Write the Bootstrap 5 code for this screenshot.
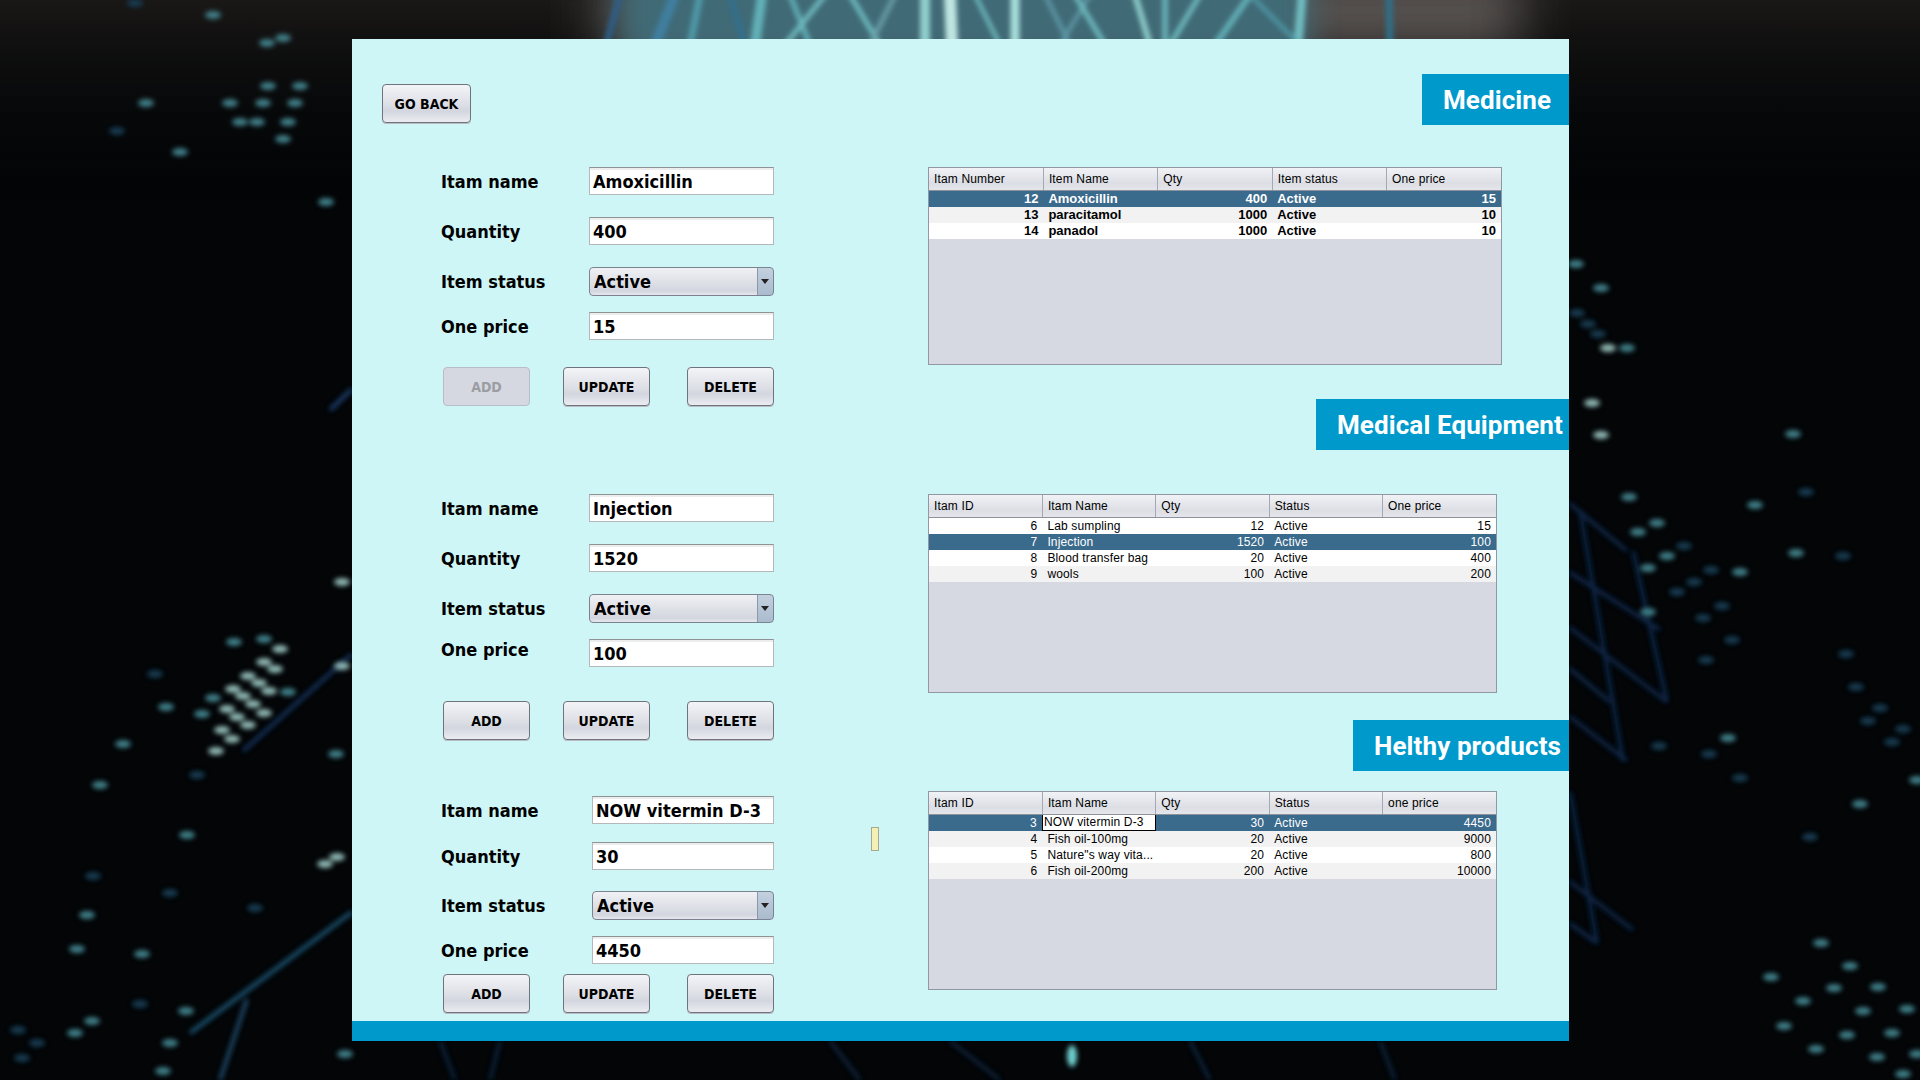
<!DOCTYPE html>
<html lang="en">
<head>
    <meta charset="UTF-8">
    <meta name="viewport" content="width=device-width, initial-scale=1.0">
    <title>Stock Management</title>
    <link href="https://cdn.jsdelivr.net/npm/bootstrap@5.3.0/dist/css/bootstrap.min.css" rel="stylesheet">
    <style>
        html, body { height: 100%; }
        body { background: #030507; overflow: hidden; font-family: "DejaVu Sans Condensed", "DejaVu Sans", sans-serif; font-stretch: condensed; }
        .bg-art { position: fixed; left: 0; top: 0; width: 1920px; height: 1080px; z-index: 0; }
        .app-panel { position: relative; z-index: 1; width: 1217px; height: 1002px; margin: 39px 0 0 352px; background: #cef6f6; }
        .app-main { height: 982px; }
        .app-foot { height: 20px; background: #0099cc; }
        .left-side { width: 576px; padding-left: 30px; }
        .right-side { width: 641px; }

        .swing-btn { width: 87px; height: 39px; padding: 2px 0 0; font-size: 14px; font-weight: 700; color: #000; border: 1px solid #6f737b; border-radius: 4px;
            background: linear-gradient(#f3f4f7, #dcdee5 55%, #d3d6df 70%, #ebecf1); box-shadow: 0 1px 0 #b9bcc4; }
        .swing-btn:disabled { color: #9b9da3; background: #d5d8e0; border-color: #b8bdc7; box-shadow: none; opacity: 1; }
        .back-btn { width: 89px; margin-top: 45px; }

        .form-block { margin-left: 59px; width: 333px; }
        .form-one { margin-top: 44px; }
        .form-two { margin-top: 88px; }
        .form-three { margin-top: 56px; }
        .field-row { display: flex; align-items: center; }
        .field-label { width: 148px; font-size: 18px; font-weight: 700; color: #000; line-height: 24px; margin: 0; }
        .field-row:has(input) .field-label { padding-top: 2px; }
        .form-three .field-label { width: 151px; }
        .label-up { position: relative; top: -4px; }
        .field-input, .field-input:focus { flex: 1; height: 28px; padding: 0 3px; border: 1px solid #b4b8bc; border-top-color: #8f9396; border-radius: 0; font-size: 18px; font-weight: 700; color: #000; box-shadow: inset 0 2px 0 #eceded; }
        .field-select, .field-select:focus { flex: 1; height: 29px; padding: 0 20px 1px 4px; border: 1px solid #7c8390; border-radius: 4px; font-size: 18px; font-weight: 700; color: #000; box-shadow: none;
            background-image: url("data:image/svg+xml,%3csvg xmlns='http://www.w3.org/2000/svg' width='8' height='5'%3e%3cpath d='M0 0h8L4 5z' fill='%23222'/%3e%3c/svg%3e"), linear-gradient(90deg, #8b98a8 1px, transparent 1px), linear-gradient(#c3d0de, #a9bbce), linear-gradient(#f0f1f4, #dcdee5 60%, #d3d6df 85%, #e6e7ec);
            background-position: right 4px center, right top, right top, left top;
            background-size: 8px 5px, 16px 100%, 16px 100%, 100% 100%;
            background-repeat: no-repeat; }
        .gap-16 { margin-top: 16px; }
        .gap-18 { margin-top: 18px; }
        .gap-21 { margin-top: 21px; }
        .gap-22 { margin-top: 22px; }
        .btn-row { display: flex; padding-left: 2px; }
        .btn-gap-a { margin-left: 33px; }
        .btn-gap-b { margin-left: 37px; }
        .btns-one { margin-top: 27px; }
        .btns-two { margin-top: 34px; }
        .btns-three { margin-top: 10px; }
        .side-marker { width: 8px; height: 24px; margin: 87px 0 0 97px; flex: none; background: #f4efb4; border: 1px solid #a6a98f; }

        .sect-title { height: 51px; padding-left: 21px; line-height: 53px; font-family: Roboto, "Liberation Sans", sans-serif; font-stretch: normal; font-size: 26px; font-weight: 700; letter-spacing: .1px; color: #fff; background: #0099cc; white-space: nowrap; }
        .title-one { width: 147px; margin-top: 35px; }
        .title-two { width: 253px; margin-top: 34px; }
        .title-three { width: 216px; margin-top: 27px; }

        .grid-box { height: 198px; background: #d6d9e1; border: 1px solid #9298a3; }
        .grid-wide { width: 574px; margin-top: 42px; }
        .grid-narrow { width: 569px; height: 199px; }
        .box-two { margin-top: 44px; }
        .box-three { margin-top: 20px; }
        .table.grid-table { table-layout: fixed; margin: 0; font-family: "Liberation Sans", Arial, sans-serif; font-stretch: normal; font-size: 12px; letter-spacing: .15px; }
        .table.grid-table > :not(caption) > * > * { padding: 0 5px; border: 0; box-shadow: none; line-height: 16px; color: #000; white-space: nowrap; overflow: hidden; }
        .table.grid-table > thead > tr > th { height: 22px; vertical-align: middle; font-weight: 400; background: linear-gradient(#f1f2f5, #dcdee5 70%, #e4e6eb); border-right: 1px solid #a3a8b2; border-bottom: 1px solid #8c929c; }
        .table.grid-table > thead > tr > th:last-child { border-right: 0; }
        .grid-table tbody tr { --bs-table-bg: #fff; }
        .grid-table tbody tr:nth-child(even) { --bs-table-bg: #f2f2f2; }
        .grid-table tbody tr.row-sel { --bs-table-bg: #3a6a8c; }
        .table.grid-table > tbody > tr.row-sel > td { color: #fff; }
        .table.grid-table.grid-bold > tbody > tr > td { font-size: 13px; font-weight: 700; letter-spacing: 0; }
        .table.grid-table > tbody > tr > td.cell-edit { padding: 0 1px; background: #fff; color: #000; border: 1px solid #000; line-height: 14px; }
    </style>
</head>
<body>
    <svg class="bg-art" viewBox="0 0 1920 1080" id="bg-art" aria-hidden="true">
        <defs>
            <filter id="soft" filterUnits="userSpaceOnUse" x="0" y="0" width="1920" height="1080"><feGaussianBlur stdDeviation="2.4"/></filter>
            <filter id="softline" filterUnits="userSpaceOnUse" x="0" y="0" width="1920" height="1080"><feGaussianBlur stdDeviation="2.8"/></filter>
            <filter id="softer" filterUnits="userSpaceOnUse" x="300" y="-100" width="1400" height="300"><feGaussianBlur stdDeviation="26"/></filter>
            <filter id="softmid" filterUnits="userSpaceOnUse" x="400" y="-100" width="1100" height="300"><feGaussianBlur stdDeviation="14"/></filter>
            <linearGradient id="topfade" x1="0" y1="0" x2="0" y2="1"><stop offset="0" stop-color="#1a1817"/><stop offset="1" stop-color="#030507" stop-opacity="0"/></linearGradient>
        </defs>
        <rect width="1920" height="200" fill="url(#topfade)"/>
        <rect x="600" y="-30" width="920" height="80" fill="#5a5453" filter="url(#softer)"/>
        <rect x="620" y="-30" width="690" height="90" fill="#3f6a76" filter="url(#softmid)"/>
        <g id="top-lines" filter="url(#soft)" fill="none"></g>
        <g id="net-lines" filter="url(#softline)" fill="none" stroke-width="4"></g>
        <g id="dots" filter="url(#soft)"></g>
    </svg>

    <div class="app-panel d-flex flex-column">
        <div class="app-main d-flex">
            <div class="left-side">
                <button class="btn swing-btn back-btn">GO BACK</button>

                <div class="form-block form-one">
                    <div class="field-row"><label class="field-label">Itam name</label><input class="form-control field-input" value="Amoxicillin"></div>
                    <div class="field-row gap-22"><label class="field-label">Quantity</label><input class="form-control field-input" value="400"></div>
                    <div class="field-row gap-22"><label class="field-label">Item status</label><select class="form-select field-select"><option>Active</option></select></div>
                    <div class="field-row gap-16"><label class="field-label">One price</label><input class="form-control field-input" value="15"></div>
                    <div class="btn-row btns-one">
                        <button class="btn swing-btn" disabled>ADD</button>
                        <button class="btn swing-btn btn-gap-a">UPDATE</button>
                        <button class="btn swing-btn btn-gap-b">DELETE</button>
                    </div>
                </div>

                <div class="form-block form-two">
                    <div class="field-row"><label class="field-label">Itam name</label><input class="form-control field-input" value="Injection"></div>
                    <div class="field-row gap-22"><label class="field-label">Quantity</label><input class="form-control field-input" value="1520"></div>
                    <div class="field-row gap-22"><label class="field-label">Item status</label><select class="form-select field-select"><option>Active</option></select></div>
                    <div class="field-row gap-16"><label class="field-label label-up">One price</label><input class="form-control field-input" value="100"></div>
                    <div class="btn-row btns-two">
                        <button class="btn swing-btn">ADD</button>
                        <button class="btn swing-btn btn-gap-a">UPDATE</button>
                        <button class="btn swing-btn btn-gap-b">DELETE</button>
                    </div>
                </div>

                <div class="d-flex">
                    <div class="form-block form-three">
                        <div class="field-row"><label class="field-label">Itam name</label><input class="form-control field-input" value="NOW vitermin D-3"></div>
                        <div class="field-row gap-18"><label class="field-label">Quantity</label><input class="form-control field-input" value="30"></div>
                        <div class="field-row gap-21"><label class="field-label">Item status</label><select class="form-select field-select"><option>Active</option></select></div>
                        <div class="field-row gap-16"><label class="field-label">One price</label><input class="form-control field-input" value="4450"></div>
                        <div class="btn-row btns-three">
                            <button class="btn swing-btn">ADD</button>
                            <button class="btn swing-btn btn-gap-a">UPDATE</button>
                            <button class="btn swing-btn btn-gap-b">DELETE</button>
                        </div>
                    </div>
                    <div class="side-marker"></div>
                </div>
            </div>

            <div class="right-side d-flex flex-column">
                <div class="sect-title title-one align-self-end">Medicine</div>
                <div class="grid-box grid-wide">
                    <table class="table grid-table grid-bold">
                        <thead><tr><th>Itam Number</th><th>Item Name</th><th>Qty</th><th>Item status</th><th>One price</th></tr></thead>
                        <tbody>
                            <tr class="row-sel"><td class="text-end">12</td><td>Amoxicillin</td><td class="text-end">400</td><td>Active</td><td class="text-end">15</td></tr>
                            <tr><td class="text-end">13</td><td>paracitamol</td><td class="text-end">1000</td><td>Active</td><td class="text-end">10</td></tr>
                            <tr><td class="text-end">14</td><td>panadol</td><td class="text-end">1000</td><td>Active</td><td class="text-end">10</td></tr>
                        </tbody>
                    </table>
                </div>

                <div class="sect-title title-two align-self-end">Medical Equipment</div>
                <div class="grid-box grid-narrow box-two">
                    <table class="table grid-table">
                        <thead><tr><th>Itam ID</th><th>Itam Name</th><th>Qty</th><th>Status</th><th>One price</th></tr></thead>
                        <tbody>
                            <tr><td class="text-end">6</td><td>Lab sumpling</td><td class="text-end">12</td><td>Active</td><td class="text-end">15</td></tr>
                            <tr class="row-sel"><td class="text-end">7</td><td>Injection</td><td class="text-end">1520</td><td>Active</td><td class="text-end">100</td></tr>
                            <tr><td class="text-end">8</td><td>Blood transfer bag</td><td class="text-end">20</td><td>Active</td><td class="text-end">400</td></tr>
                            <tr><td class="text-end">9</td><td>wools</td><td class="text-end">100</td><td>Active</td><td class="text-end">200</td></tr>
                        </tbody>
                    </table>
                </div>

                <div class="sect-title title-three align-self-end">Helthy products</div>
                <div class="grid-box grid-narrow box-three">
                    <table class="table grid-table">
                        <thead><tr><th>Itam ID</th><th>Itam Name</th><th>Qty</th><th>Status</th><th>one price</th></tr></thead>
                        <tbody>
                            <tr class="row-sel"><td class="text-end">3</td><td class="cell-edit">NOW vitermin D-3</td><td class="text-end">30</td><td>Active</td><td class="text-end">4450</td></tr>
                            <tr><td class="text-end">4</td><td>Fish oil-100mg</td><td class="text-end">20</td><td>Active</td><td class="text-end">9000</td></tr>
                            <tr><td class="text-end">5</td><td>Nature"s way vita...</td><td class="text-end">20</td><td>Active</td><td class="text-end">800</td></tr>
                            <tr><td class="text-end">6</td><td>Fish oil-200mg</td><td class="text-end">200</td><td>Active</td><td class="text-end">10000</td></tr>
                        </tbody>
                    </table>
                </div>
            </div>
        </div>
        <div class="app-foot"></div>
    </div>

    <script>
        // background picture: x, y, level (0 dim, 1 normal, 2 bright, 3 tall teal)
        const dots = [
            [283,38,1],[267,43,1],[268,86,1],[300,86,1],[230,103,1],[263,103,1],[295,103,1],[240,122,1],[257,122,1],[288,122,1],[283,139,1],[146,103,1],[180,152,1],[326,202,1],[117,131,0],[213,15,1],[135,3,0],
            [342,582,2],[342,666,2],[336,754,1],[288,692,1],[280,649,2],[264,639,1],[234,642,1],[264,662,2],[275,669,2],[248,676,2],[259,683,2],[269,691,2],[233,689,2],[243,696,2],[253,704,2],[264,713,2],[227,709,2],[237,717,2],[248,725,2],[222,730,2],[232,739,2],[216,751,2],[213,698,1],[202,714,1],[166,707,1],[155,674,0],[123,744,1],[100,785,1],[197,775,0],[187,835,1],[325,864,2],[337,857,2],[87,915,1],[77,949,1],[142,954,1],[140,1004,0],[186,1011,1],[92,1021,1],[75,1033,1],[37,1043,0],[18,1030,0],[170,1043,1],[163,1071,1],[345,1054,1],[93,876,0],[170,893,0],[255,908,0],
            [1576,264,1],[1601,288,1],[1577,313,0],[1588,324,0],[1598,334,0],[1608,348,2],[1627,348,1],[1592,403,2],[1601,435,2],[1629,497,1],[1657,523,1],[1638,532,1],[1667,556,1],[1684,546,0],[1648,568,1],[1711,570,0],[1694,582,0],[1740,572,1],[1677,592,0],[1722,606,0],[1648,612,1],[1703,618,0],[1732,640,0],[1706,660,0],[1793,434,1],[1806,492,0],[1755,505,1],[1796,553,1],[1843,556,0],[1728,738,1],[1709,754,0],[1740,778,0],[1659,746,0],[1860,804,1],[1810,837,0],[1917,780,1],[1846,654,0],[1856,687,0],[1868,721,0],[1880,708,0],[1892,742,0],[1903,729,0],
            [1821,943,1],[1850,966,1],[1771,977,1],[1834,988,1],[1878,987,1],[1803,1001,1],[1863,1011,1],[1907,1009,1],[1784,1026,1],[1847,1035,1],[1892,1033,1],[1816,1049,1],[1877,1057,1],[1917,1054,1],[1903,1074,1],
            [1072,1056,3],[22,1058,0]
        ];
        const colors = ["#183a50", "#3f7f88", "#8fb8b4", "#6fd0d0"];
        let dotMarkup = "";
        dots.forEach(d => {
            const tall = d[2] === 3;
            dotMarkup += `<ellipse cx="${d[0]}" cy="${d[1]}" rx="${tall ? 5 : 8}" ry="${tall ? 11 : 4}" fill="${colors[d[2]]}"/>`;
        });
        document.getElementById("dots").innerHTML = dotMarkup;

        // x1, y1, x2, y2, colour
        const net = [
            [330,410,352,389,"#1a3f70"],[243,751,352,654,"#15305a"],[190,1033,352,912,"#1f5878"],[220,1080,247,999,"#1f4a68"],
            [1569,503,1627,551,"#10274a"],[1569,572,1660,630,"#10274a"],[1569,627,1667,702,"#10274a"],[1569,668,1610,702,"#10274a"],[1569,716,1627,761,"#10274a"],[1580,510,1623,761,"#10274a"],[1633,551,1667,702,"#10274a"],[1570,792,1597,943,"#10274a"],[1569,881,1633,930,"#10274a"],[1569,923,1597,943,"#10274a"],
            [440,1041,455,1080,"#0e2238"],[500,1041,490,1080,"#0e2238"],[830,1041,860,1080,"#0e2238"],[950,1041,1000,1080,"#0e2238"],[1190,1041,1210,1080,"#0e2238"],[1380,1041,1395,1080,"#0e2238"]
        ];
        document.getElementById("net-lines").innerHTML = net.map(l => `<line x1="${l[0]}" y1="${l[1]}" x2="${l[2]}" y2="${l[3]}" stroke="${l[4]}"/>`).join("");

        // x at top, x at panel edge, width, colour
        const streaks = [
            [620,606,6,"#2d5f8a"],[675,655,10,"#3f7fa0"],[700,690,7,"#4f9aa8"],[730,745,5,"#2f6f90"],[762,755,10,"#62b0b8"],
            [790,810,5,"#62b0b8"],[825,785,5,"#6fbcc0"],[850,880,5,"#6fbcc0"],[895,870,5,"#6a9fa8"],[925,925,10,"#8fcfcc"],
            [950,952,12,"#bfe6e2"],[975,1000,4,"#6fbcc0"],[1015,1015,9,"#a8e0dc"],[1045,1070,4,"#5f9aa8"],[1090,1060,4,"#5f9aa8"],
            [1075,1105,5,"#6fbcc0"],[1135,1150,6,"#8fcfcc"],[1165,1165,5,"#6fbcc0"],[1200,1170,5,"#6fbcc0"],[1250,1215,6,"#62b0b8"],
            [1302,1298,9,"#6fbcc0"],[1250,1300,4,"#4f9aa8"],[1389,1390,7,"#2f6f88"]
        ];
        document.getElementById("top-lines").innerHTML = streaks.map(s => `<line x1="${s[0]}" y1="-5" x2="${s[1]}" y2="45" stroke="${s[3]}" stroke-width="${s[2]}"/>`).join("");
    </script>
    <script src="https://cdn.jsdelivr.net/npm/bootstrap@5.3.0/dist/js/bootstrap.bundle.min.js"></script>
</body>
</html>
